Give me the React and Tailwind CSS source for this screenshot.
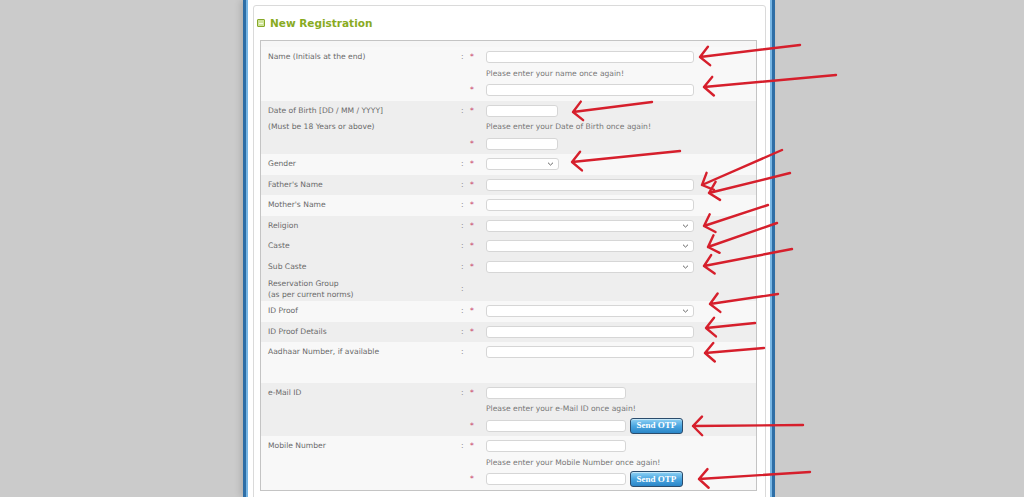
import React from 'react';

const LIGHT = 'bg-[#f8f8f8]';
const GRAY = 'bg-[#eeeeee]';

// annotation arrows: [tipX, tipY, tailX, tailY]
const arrows = [
  [700, 57, 800, 45],
  [704, 87, 836, 75],
  [573, 112, 652, 102],
  [572, 162, 680, 151],
  [702, 185, 782, 150],
  [709, 193, 790, 173],
  [704, 226, 768, 205],
  [708, 247, 777, 223],
  [704, 266, 792, 249],
  [710, 304, 778, 294],
  [706, 328, 755, 323],
  [705, 353, 764, 348],
  [693, 426, 803, 425],
  [699, 479, 810, 472],
];

function arrowPath([x1, y1, x2, y2]) {
  const dx = x2 - x1;
  const dy = y2 - y1;
  const len = Math.hypot(dx, dy);
  const ux = dx / len;
  const uy = dy / len;
  const arm = (ang) => {
    const c = Math.cos(ang);
    const s = Math.sin(ang);
    return [x1 + 13 * (ux * c - uy * s), y1 + 13 * (ux * s + uy * c)];
  };
  const a = arm(0.8);
  const b = arm(-0.8);
  return `M${x2} ${y2} L${x1} ${y1} M${a[0]} ${a[1]} L${x1} ${y1} L${b[0]} ${b[1]}`;
}

function Chevron() {
  return (
    <svg width="7" height="5" viewBox="0 0 7 5" className="absolute right-[4px] top-1/2 -translate-y-1/2">
      <path d="M1 1.2 L3.5 3.6 L6 1.2" fill="none" stroke="#666" strokeWidth="1" />
    </svg>
  );
}

function Input({ w = 'w-[208px]', select = false }) {
  return (
    <div className={`relative h-[12px] ${w} bg-white border border-[#d6d6d6] rounded-[3px]`}>
      {select && <Chevron />}
    </div>
  );
}

function SendOtp() {
  return (
    <button className="ml-[4px] h-[16px] w-[53px] rounded-[3px] border border-[#2b4c6c] bg-gradient-to-b from-[#8fd2f4] via-[#4aa6e0] to-[#2a86c8] text-white text-[9px] font-bold leading-none shadow-[inset_0_1px_0_rgba(255,255,255,0.5)]" style={{ fontFamily: '"Liberation Serif", serif' }}>
      Send OTP
    </button>
  );
}

function Line({ label, colon, star, children }) {
  return (
    <div className="grid grid-cols-[193px_9px_16px_1fr] h-[16.5px] items-center">
      <div className="text-[#6a6a6a] whitespace-nowrap">{label}</div>
      <div className="text-[#8a8a8a]">{colon ? ':' : ''}</div>
      <div className="text-[#c8466c]">{star ? '*' : ''}</div>
      <div className="flex items-center">{children}</div>
    </div>
  );
}

function Help({ children }) {
  return <span className="text-[#777] whitespace-nowrap">{children}</span>;
}

function Simple({ bg, label, colon = true, star = true, w, select }) {
  return (
    <div className={`${bg} py-[2px] pl-[7px]`}>
      <Line label={label} colon={colon} star={star}>
        <Input w={w} select={select} />
      </Line>
    </div>
  );
}

export default function App() {
  return (
    <div className="relative w-[1024px] h-[497px] overflow-hidden bg-[#cbcbcb]" style={{ fontFamily: '"DejaVu Sans", Verdana, sans-serif' }}>
      <div className="ml-[243px] w-[532px] h-full bg-white border-x-[3px] border-[#2e6ea6] shadow-[inset_2px_0_0_#78b6e4,inset_-2px_0_0_#78b6e4,-3px_0_6px_rgba(0,0,0,0.12)] pt-[5px] pl-[7px] pr-[6px]">
        <div className="h-[600px] border border-[#dadada] rounded-[3px] bg-white pl-[6px] pr-[8px]">
          {/* Header */}
          <div className="h-[34px] flex items-center gap-[5px] -ml-[3px]">
            <div className="w-[8px] h-[8px] rounded-[1px] border border-[#86a828] bg-[#cfe39a] flex items-center justify-center">
              <div className="w-[4px] h-[1px] bg-[#f4f9e4]" />
            </div>
            <h2 className="text-[10.5px] font-bold text-[#89ab1f] leading-none">New Registration</h2>
          </div>

          {/* Form table */}
          <div className="border border-[#c4c4c4] bg-[#f6f6f6] pt-[6px] text-[7.6px] leading-none">
            <div className={`${LIGHT} py-[2px] pl-[7px]`}>
              <Line label="Name (Initials at the end)" colon star><Input /></Line>
              <Line><Help>Please enter your name once again!</Help></Line>
              <Line star><Input /></Line>
            </div>
            <div className={`${GRAY} py-[2px] pl-[7px]`}>
              <Line label="Date of Birth [DD / MM / YYYY]" colon star><Input w="w-[72px]" /></Line>
              <Line label="(Must be 18 Years or above)"><Help>Please enter your Date of Birth once again!</Help></Line>
              <Line star><Input w="w-[72px]" /></Line>
            </div>
            <Simple bg={LIGHT} label="Gender" w="w-[73px]" select />
            <Simple bg={GRAY} label="Father's Name" />
            <Simple bg={LIGHT} label="Mother's Name" />
            <Simple bg={GRAY} label="Religion" select />
            <Simple bg={GRAY} label="Caste" select />
            <Simple bg={GRAY} label="Sub Caste" select />
            <div className={`${GRAY} h-[24px] pl-[7px] grid grid-cols-[193px_9px_16px_1fr] items-center`}>
              <div className="text-[#6a6a6a] leading-[11.5px]">
                <div>Reservation Group</div>
                <div>(as per current norms)</div>
              </div>
              <div className="text-[#8a8a8a]">:</div>
              <div />
              <div />
            </div>
            <Simple bg={LIGHT} label="ID Proof" select />
            <Simple bg={GRAY} label="ID Proof Details" />
            <div className={`${LIGHT} pt-[2px] pb-[22px] pl-[7px]`}>
              <Line label="Aadhaar Number, if available" colon><Input /></Line>
            </div>
            <div className={`${GRAY} py-[2px] pl-[7px]`}>
              <Line label="e-Mail ID" colon star><Input w="w-[140px]" /></Line>
              <Line><Help>Please enter your e-Mail ID once again!</Help></Line>
              <Line star><Input w="w-[140px]" /><SendOtp /></Line>
            </div>
            <div className={`${LIGHT} py-[2px] pl-[7px]`}>
              <Line label="Mobile Number" colon star><Input w="w-[140px]" /></Line>
              <Line><Help>Please enter your Mobile Number once again!</Help></Line>
              <Line star><Input w="w-[140px]" /><SendOtp /></Line>
            </div>
          </div>
        </div>
      </div>

      {/* red annotation arrows */}
      <svg className="absolute inset-0 pointer-events-none" width="1024" height="497">
        {arrows.map((a, i) => (
          <path key={i} d={arrowPath(a)} fill="none" stroke="#d61f2c" strokeWidth="2.4" strokeLinecap="round" strokeLinejoin="round" />
        ))}
      </svg>
    </div>
  );
}
